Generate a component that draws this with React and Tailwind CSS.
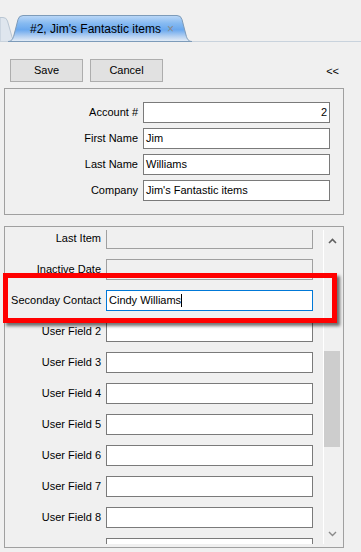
import React from "react";

const font = { fontFamily: '"Liberation Sans", Arial, sans-serif' };

function Field({ value, align = "left", disabled = false, focused = false, caret = false }) {
    let cls = "h-[21px] flex items-center px-[2px] text-[11px] text-black border ";
    if (disabled) cls += "bg-[#f0f0f0] border-[#a0a0a0]";
    else if (focused) cls += "bg-white border-[#0078d7]";
    else cls += "bg-white border-[#7a7a7a]";
    if (align === "right") cls += " justify-end";
    return (
        <div className={cls}>
            <span className="whitespace-nowrap">{value}</span>
            {caret ? <span className="w-px h-[13px] bg-black" /> : null}
        </div>
    );
}

function TabStrip() {
    return (
        <div className="relative h-[42px] flex items-end pl-[30px] pb-[6px]">
            <svg className="absolute inset-0" width="361" height="42" viewBox="0 0 361 42">
                <defs>
                    <linearGradient id="tabg" x1="0" y1="0" x2="0" y2="1">
                        <stop offset="0" stopColor="#bcd8f7" />
                        <stop offset="0.3" stopColor="#86baf1" />
                        <stop offset="0.55" stopColor="#6aa8ee" />
                        <stop offset="0.8" stopColor="#b4d0f1" />
                        <stop offset="1" stopColor="#e6eef7" />
                    </linearGradient>
                </defs>
                <path
                    d="M0 17.5 L3 17.5 Q6.5 17.5 7.5 21 L12 37 Q13 41 16 41.5 L0 41.5 Z"
                    fill="#dfe6ee"
                    stroke="#b9c6d3"
                />
                <line x1="0" y1="41.5" x2="361" y2="41.5" stroke="#c9d3dd" />
                <path
                    d="M8 41.5 C11.5 41.5 13 39 14 35 L18 19.5 Q19 15.5 23 15.5 L177 15.5 Q181 15.5 182 19.5 L186 35 C187 39 188.5 41.5 192 41.5 Z"
                    fill="url(#tabg)"
                    stroke="#7d9bb9"
                />
            </svg>
            <span className="relative text-[12px] text-black leading-[14px]">#2, Jim's Fantastic items</span>
            <span className="relative ml-[6px] text-[12px] text-[#8a8a8a] leading-[14px]">×</span>
        </div>
    );
}

function TopPanel() {
    const rows = [
        { label: "Account #", value: "2", align: "right" },
        { label: "First Name", value: "Jim" },
        { label: "Last Name", value: "Williams" },
        { label: "Company", value: "Jim's Fantastic items" },
    ];
    return (
        <div className="mx-[4px] w-[340px] h-[127px] border border-[#a0a0a0] pt-[13px]">
            <div className="flex flex-col gap-[5px]">
                {rows.map((r) => (
                    <div key={r.label} className="flex items-center">
                        <div className="w-[133px] text-right text-[11px] text-black pr-[0px]">{r.label}</div>
                        <div className="ml-[5px] w-[187px]">
                            <Field value={r.value} align={r.align} />
                        </div>
                    </div>
                ))}
            </div>
        </div>
    );
}

function BottomPanel() {
    const rows = [
        { label: "Last Item", disabled: true },
        { label: "Inactive Date", disabled: true },
        { label: "Seconday Contact", value: "Cindy Williams", focused: true, caret: true },
        { label: "User Field 2" },
        { label: "User Field 3" },
        { label: "User Field 4" },
        { label: "User Field 5" },
        { label: "User Field 6" },
        { label: "User Field 7" },
        { label: "User Field 8" },
        { label: "User Field 9" },
    ];
    return (
        <div className="mx-[4px] w-[340px] h-[322px] border border-[#a0a0a0] flex">
            <div className="w-[318px] mt-[3px] mb-[3px] overflow-hidden">
                <div className="mt-[-2px] flex flex-col gap-[10px]">
                    {rows.map((r) => (
                        <div key={r.label} className="flex items-center">
                            <div className="w-[96px] text-right text-[11px] text-black whitespace-nowrap">{r.label}</div>
                            <div className="ml-[5px] w-[207px]">
                                <Field value={r.value} disabled={r.disabled} focused={r.focused} caret={r.caret} />
                            </div>
                        </div>
                    ))}
                </div>
            </div>
            <div className="w-[17px] border-l border-white flex flex-col mt-[3px] mb-[3px]">
                <div className="h-[16px] flex items-center justify-center mt-[3px]">
                    <svg width="9" height="6" viewBox="0 0 9 6">
                        <path d="M1 5 L4.5 1.5 L8 5" fill="none" stroke="#606060" strokeWidth="1.6" />
                    </svg>
                </div>
                <div className="mt-[102px] h-[96px] bg-[#cdcdcd]" />
                <div className="flex-1" />
                <div className="h-[16px] flex items-center justify-center mb-[2px]">
                    <svg width="9" height="6" viewBox="0 0 9 6">
                        <path d="M1 1 L4.5 4.5 L8 1" fill="none" stroke="#8a8a8a" strokeWidth="1.4" />
                    </svg>
                </div>
            </div>
        </div>
    );
}

export default function App() {
    return (
        <div className="relative w-[361px] h-[552px] bg-[#f0f0f0] overflow-hidden" style={font}>
            <TabStrip />
            <div className="mt-[17px] flex items-center px-[10px] h-[23px]">
                <button className="w-[73px] h-[23px] bg-[#e1e1e1] border border-[#adadad] text-[11px] text-black">
                    Save
                </button>
                <button className="ml-[7px] w-[73px] h-[23px] bg-[#e1e1e1] border border-[#adadad] text-[11px] text-black">
                    Cancel
                </button>
                <div className="ml-auto mr-[12px] text-[11px] text-black mt-[2px]">&lt;&lt;</div>
            </div>
            <div className="mt-[6px]">
                <TopPanel />
            </div>
            <div className="mt-[11px]">
                <BottomPanel />
            </div>
            <div className="absolute left-[3px] top-[273px] w-[334px] h-[50px] border-[5px] border-[#ff0000] shadow-[3px_3px_3px_rgba(0,0,0,0.55)]" />
        </div>
    );
}
